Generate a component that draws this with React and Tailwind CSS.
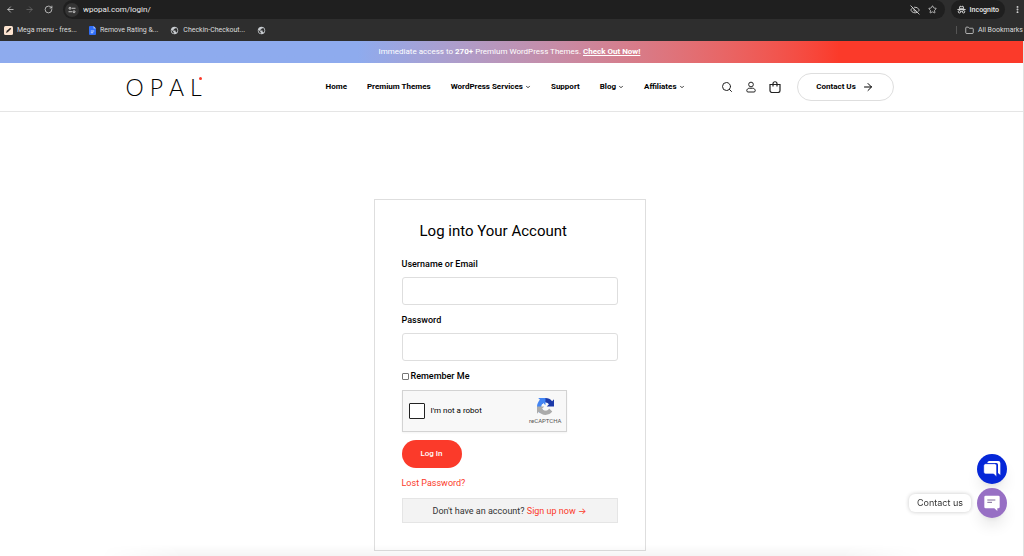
import React, { useState } from "react";
import {
  ArrowLeft,
  ArrowRight,
  ChevronDown,
  EyeOff,
  Folder,
  MoreVertical,
  RotateCw,
  Search,
  Star,
} from "lucide-react";
import { MdPublic } from "react-icons/md";

const BOOKMARKS = [
  { label: "Mega menu - fres...", icon: "pen" },
  { label: "Remove Rating &...", icon: "doc" },
  { label: "Checkin-Checkout...", icon: "globe" },
  { label: "", icon: "globe" },
];

const NAV = [
  { label: "Home" },
  { label: "Premium Themes" },
  { label: "WordPress Services", menu: true },
  { label: "Support" },
  { label: "Blog", menu: true },
  { label: "Affiliates", menu: true },
];

function IncognitoIcon() {
  return (
    <svg viewBox="0 0 24 24" className="size-[9px]" fill="none" stroke="#e3e3e3" strokeWidth="2.4" aria-hidden>
      <path d="M6 10 8 3l4 1.4L16 3l2 7z" />
      <path d="M1 12h22" />
      <circle cx="6.5" cy="18" r="3.2" />
      <circle cx="17.5" cy="18" r="3.2" />
      <path d="M9.7 17.5c1.4-1 3.200-1 4.600 0" />
    </svg>
  );
}

function SiteInfoIcon() {
  return (
    <svg viewBox="0 0 16 16" className="size-2" fill="none" stroke="#d5d5d5" strokeWidth="1.8" aria-hidden>
      <circle cx="4" cy="4.500" r="2" />
      <path d="M8 4.500h7M1 11.500h7" />
      <circle cx="12" cy="11.500" r="2" />
    </svg>
  );
}

function BookmarkIcon({ type }) {
  if (type === "pen") {
    return (
      <svg viewBox="0 0 18 18" className="size-[9px]" aria-hidden>
        <rect width="18" height="18" rx="3" fill="#fbe3cf" />
        <path d="m4 14 1.500-4.500L12.500 3.500l2 2L8 12z" fill="#2a2522" />
      </svg>
    );
  }
  if (type === "doc") {
    return (
      <svg viewBox="0 0 14 18" className="h-[9px] w-[7px]" aria-hidden>
        <path d="M2 0h7l5 5v11a2 2 0 0 1-2 2H2a2 2 0 0 1-2-2V2a2 2 0 0 1 2-2z" fill="#2f6df6" />
        <path d="M9 0l5 5H9z" fill="#a8c5ff" />
        <path d="M3.500 10h7M3.500 13.500h5" stroke="#fff" strokeWidth="1.500" />
      </svg>
    );
  }
  return <MdPublic className="size-[9px] text-[#c8ccd0]" aria-hidden />;
}

function BrowserBar() {
  return (
    <div className="bg-[#2e2e2e] text-[#dcdcdc]">
      <div className="flex h-[19px] items-center pr-0.5 pl-1.5">
        <button type="button" aria-label="Back">
          <ArrowLeft className="size-[9px]" />
        </button>
        <button type="button" aria-label="Forward" className="ml-2.5 text-[#6d6d6d]">
          <ArrowRight className="size-[9px]" />
        </button>
        <button type="button" aria-label="Reload" className="ml-2.5">
          <RotateCw className="size-[9px]" />
        </button>
        <div className="ml-2.5 flex h-[19px] flex-1 items-center rounded-full bg-[#1f1f1f] pr-2 pl-0.5">
          <button type="button" aria-label="Site information" className="grid size-3.5 place-items-center rounded-full bg-[#343434]">
            <SiteInfoIcon />
          </button>
          <input
            aria-label="Address"
            defaultValue="wpopal.com/login/"
            className="ml-1 min-w-0 flex-1 bg-transparent text-[8px] leading-3 text-[#ececec] outline-none"
          />
          <EyeOff className="size-2.5" aria-hidden />
          <button type="button" aria-label="Bookmark this page" className="ml-2">
            <Star className="size-[9px]" />
          </button>
        </div>
        <div className="ml-1.5 flex h-[19px] items-center gap-1 rounded-full bg-[#1f1f1f] px-1.5 text-[7px] leading-3 font-medium text-[#ececec]">
          <IncognitoIcon />
          Incognito
        </div>
        <button type="button" aria-label="Browser menu" className="ml-2">
          <MoreVertical className="size-[9px]" strokeWidth={3} />
        </button>
      </div>
      <div className="flex h-[22px] items-center gap-3 pr-px pl-1 text-[7px] leading-3">
        {BOOKMARKS.map((b, i) => (
          <a key={i} href="#" aria-label={b.label || "Bookmark"} className="flex items-center gap-1 whitespace-nowrap">
            <BookmarkIcon type={b.icon} />
            {b.label}
          </a>
        ))}
        <span className="ml-auto h-2 w-px bg-[#555]" />
        <button type="button" className="-ml-1 flex items-center gap-1 whitespace-nowrap">
          <Folder className="size-[9px]" aria-hidden />
          All Bookmarks
        </button>
      </div>
    </div>
  );
}

function Logo() {
  return (
    <a href="#" aria-label="Opal" className="relative flex gap-1.5 font-[Lato] text-[23px] leading-7 font-light text-black">
      <span>O</span>
      <span>P</span>
      <span>A</span>
      <span>L</span>
      <span className="absolute top-1 right-0 size-[3px] rounded-full bg-[#fb3a2a]" />
    </a>
  );
}

function SiteHeader() {
  return (
    <header className="border-b border-[#e5e5e5] pr-1">
      <div className="mx-auto flex h-12 max-w-[768px] items-center">
        <Logo />
        <nav className="ml-auto flex items-center gap-5 text-[8px] leading-3 font-bold text-black">
          {NAV.map((item) => (
            <a key={item.label} href="#" className="flex items-center gap-0.5 whitespace-nowrap">
              {item.label}
              {item.menu && <ChevronDown className="size-1.5" strokeWidth={3} aria-hidden />}
            </a>
          ))}
        </nav>
        <div className="ml-9 flex items-center gap-3 text-[#222]">
          <button type="button" aria-label="Search">
            <Search className="size-3" strokeWidth={2} />
          </button>
          <button type="button" aria-label="Account">
            <svg viewBox="0 0 24 24" className="size-3" fill="none" stroke="currentColor" strokeWidth="2" aria-hidden>
              <circle cx="12" cy="7" r="4.700" />
              <path d="M8.500 14.500h7c3 0 5 2.500 5 5 0 1.500-1 2.500-2.500 2.500H6c-1.500 0-2.500-1-2.500-2.500 0-2.500 2-5 5-5z" />
            </svg>
          </button>
          <button type="button" aria-label="Cart">
            <svg viewBox="0 0 24 24" className="size-3" fill="none" stroke="currentColor" strokeWidth="2.4" aria-hidden>
              <path d="M2 7h20v12a4 4 0 0 1-4 4H6a4 4 0 0 1-4-4z" />
              <path d="M8 11V5.500a4 4 0 0 1 8 0V11" />
            </svg>
          </button>
        </div>
        <a
          href="#"
          className="ml-4 flex h-7 w-[97px] items-center justify-center gap-1.5 rounded-full border border-[#dedede] text-[8px] leading-3 font-bold text-black"
        >
          Contact Us
          <ArrowRight className="size-3" aria-hidden />
        </a>
      </div>
    </header>
  );
}

function Recaptcha() {
  return (
    <div className="mt-2 flex h-[42px] w-[165px] items-center border border-[#d3d3d3] bg-[#f8f8f8] pr-1 pl-1.5 shadow-xs">
      <input
        id="robot"
        type="checkbox"
        className="size-4 appearance-none rounded-[1px] border border-[#222] bg-white checked:bg-[#4285f4]"
      />
      <label htmlFor="robot" className="ml-1.5 text-[8px] leading-3 text-black">
        I'm not a robot
      </label>
      <div className="ml-auto flex flex-col items-center gap-0.5">
        <svg viewBox="0 0 64 64" className="size-[17px]" aria-hidden>
          <path
            fill="#1C3AA9"
            d="M64 31.955l-.033-1.370V4.687l-7.160 7.160C50.948 4.674 42.033.093 32.050.093c-10.400 0-19.622 4.960-25.458 12.640l11.736 11.860a15.550 15.550 0 0 1 4.754-5.334c2.050-1.600 4.952-2.906 8.968-2.906.485 0 .860.057 1.135.163 4.976.393 9.288 3.140 11.828 7.124l-8.307 8.307L64 31.953"
          />
          <path
            fill="#4285F4"
            d="M31.862.094l-1.370.033H4.594l7.160 7.160C4.580 13.147 0 22.060 0 32.046c0 10.400 4.960 19.622 12.640 25.458L24.500 45.768a15.550 15.550 0 0 1-5.334-4.754c-1.600-2.050-2.906-4.952-2.906-8.968 0-.485.057-.860.163-1.135.393-4.976 3.140-9.288 7.124-11.828l8.307 8.307L31.860.095"
          />
          <path
            fill="#ABABAB"
            d="M.001 32.045l.033 1.370v25.898l7.160-7.160c5.860 7.173 14.774 11.754 24.760 11.754 10.400 0 19.622-4.960 25.458-12.640l-11.736-11.860a15.550 15.550 0 0 1-4.754 5.334c-2.050 1.600-4.952 2.906-8.968 2.906-.485 0-.860-.057-1.135-.163-4.976-.393-9.288-3.140-11.828-7.124l8.307-8.307c-10.522.040-22.400.066-27.295-.005"
          />
        </svg>
        <span className="text-[6px] leading-2 text-[#555]">reCAPTCHA</span>
      </div>
    </div>
  );
}

function LoginForm() {
  const [remember, setRemember] = useState(false);

  return (
    <form
      className="mx-auto mt-[87px] max-w-[272px] border border-[#dedede] px-[27px] pt-[21px] pb-[27px] text-[9px] leading-3 text-black"
      onSubmit={(e) => e.preventDefault()}
    >
      <h1 className="pl-[18px] text-[15px] leading-5">Log into Your Account</h1>

      <label htmlFor="username" className="mt-[17px] block font-medium">
        Username or Email
      </label>
      <input id="username" type="text" className="mt-[7px] block h-7 w-full rounded-[3px] border border-[#dedede] px-2 outline-none" />

      <label htmlFor="password" className="mt-[9px] block font-medium">
        Password
      </label>
      <input id="password" type="password" className="mt-[7px] block h-7 w-full rounded-[3px] border border-[#dedede] px-2 outline-none" />

      <label className="mt-[9px] flex items-center gap-0.5 font-medium">
        <input
          type="checkbox"
          checked={remember}
          onChange={(e) => setRemember(e.target.checked)}
          className="size-[7px] appearance-none rounded-[1px] border border-[#767676] checked:bg-[#0b57d0]"
        />
        Remember Me
      </label>

      <Recaptcha />

      <button type="submit" className="mt-2 h-7 w-[60px] rounded-full bg-[#fb3a2a] text-[8px] leading-3 font-medium text-white">
        Log In
      </button>

      <a href="#" className="mt-[9px] block text-[#fb3a2a]">
        Lost Password?
      </a>
      <p className="mt-[9px] flex h-[25px] items-center justify-center border border-[#e5e5e5] bg-[#f3f3f3] text-[#333]">
        Don't have an account?&nbsp;
        <a href="#" className="text-[#fb3a2a]">
          Sign up now <span className="font-[Inter]">→</span>
        </a>
      </p>
    </form>
  );
}

function ChatWidgets() {
  return (
    <div className="fixed right-[17px] bottom-[38px] flex flex-col items-end gap-1">
      <button type="button" aria-label="Live chat" className="grid size-[30px] place-items-center rounded-full bg-[#0527d8] shadow-lg">
        <svg viewBox="0 0 54 54" className="size-[18px]" aria-hidden>
          <path d="M18 3h28a6 6 0 0 1 6 6v36l-7-6V14a5 5 0 0 0-5-5H13a6 6 0 0 1 5-6z" fill="#fff" />
          <path d="M8 11h27a6 6 0 0 1 6 6v34l-9-9H8a6 6 0 0 1-6-6V17a6 6 0 0 1 6-6z" fill="#fff" stroke="#0527d8" strokeWidth="2" />
        </svg>
      </button>
      <div className="flex items-center gap-1.5">
        <span className="rounded-md bg-white px-2 py-0.5 font-[Inter] text-[9px] leading-[14px] text-[#333] shadow-[0_0_4px_rgba(0,0,0,0.22)]">
          Contact us
        </span>
        <button type="button" aria-label="Contact us" className="grid size-[30px] place-items-center rounded-full bg-[#976fc4] shadow-lg">
          <svg viewBox="0 0 48 48" className="size-4" aria-hidden>
            <path d="M5 2h38a4 4 0 0 1 4 4v30a4 4 0 0 1-4 4h-3v8l-9-8H5a4 4 0 0 1-4-4V6a4 4 0 0 1 4-4z" fill="#fff" />
            <path d="M10 15h24M10 22h14" stroke="#7d6896" strokeWidth="3" />
          </svg>
        </button>
      </div>
    </div>
  );
}

export default function App() {
  return (
    <div className="flex min-h-screen flex-col bg-white font-[Roboto,sans-serif]">
      <BrowserBar />
      <div className="relative flex-1 border-r border-[#e2e2e2]">
        <div className="bg-linear-to-r from-[#8eabee] from-35% to-[#fb3a2a] to-82% py-1 pr-1 text-center text-[8px] leading-[14px] text-white">
          Immediate access to <strong className="font-bold">270+</strong> Premium WordPress Themes.{" "}
          <a href="#" className="font-bold underline">
            Check Out Now!
          </a>
        </div>
        <SiteHeader />
        <main className="pr-1 pb-1.5">
          <LoginForm />
        </main>
      </div>
      <ChatWidgets />
      <div className="pointer-events-none fixed inset-x-[100px] bottom-0 h-3 bg-linear-to-t from-black/4 to-transparent mask-x-from-90%" />
    </div>
  );
}
